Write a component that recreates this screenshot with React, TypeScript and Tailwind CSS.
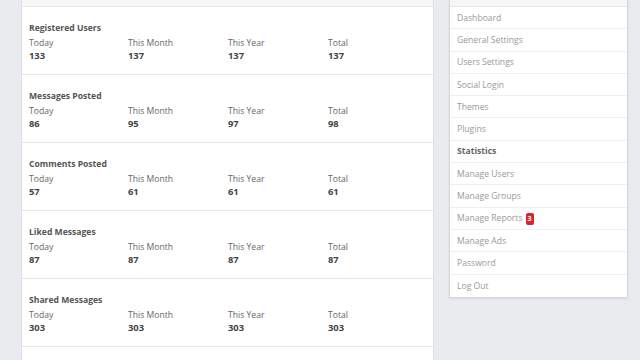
const stats = [
  { title: "Registered Users", values: ["133", "137", "137", "137"] },
  { title: "Messages Posted", values: ["86", "95", "97", "98"] },
  { title: "Comments Posted", values: ["57", "61", "61", "61"] },
  { title: "Liked Messages", values: ["87", "87", "87", "87"] },
  { title: "Shared Messages", values: ["303", "303", "303", "303"] },
];

const periods = ["Today", "This Month", "This Year", "Total"];

const menu = [
  "Dashboard",
  "General Settings",
  "Users Settings",
  "Social Login",
  "Themes",
  "Plugins",
  "Statistics",
  "Manage Users",
  "Manage Groups",
  "Manage Reports",
  "Manage Ads",
  "Password",
  "Log Out",
];

export default function App() {
  return (
    <div
      className="flex h-[360px] w-[640px] items-start overflow-hidden bg-[#e9ebee]"
      style={{ fontFamily: '"Open Sans", sans-serif' }}
    >
      {/* stats panel */}
      <div className="ml-[21px] w-[413px] border-x border-[#dcdfe3] bg-white">
        <div className="h-[7px] border-b border-[#e6e6e6] bg-[#f7f7f7]" />
        {stats.map((s) => (
          <div key={s.title} className="h-[68px] border-b border-[#e6e6e6] px-[7px] pt-[15px]">
            <p className="text-[8.6px] leading-[13px] font-bold text-[#555]">{s.title}</p>
            <div className="mt-[2px] grid grid-cols-[99px_100px_100px_100px]">
              {periods.map((p, i) => (
                <div key={p}>
                  <p className="text-[8.6px] leading-[12px] text-[#666]">{p}</p>
                  <p className="text-[9.4px] leading-[13px] font-bold text-[#444]">{s.values[i]}</p>
                </div>
              ))}
            </div>
          </div>
        ))}
        <div className="h-[30px]" />
      </div>

      {/* sidebar menu */}
      <div className="ml-[15px] w-[179px] border border-t-0 border-[#d5d8dc] bg-white shadow-[0_1px_2px_rgba(0,0,0,0.08)]">
        <div className="h-[7px] border-b border-[#e6e6e6] bg-[#f7f7f7]" />
        {menu.map((m, i) => (
          <div
            key={m}
            className={
              "flex h-[22.3px] items-center gap-[3px] px-[7px] pt-[1px] text-[8.6px] " +
              (i < menu.length - 1 ? "border-b border-[#efefef] " : "") +
              (m === "Statistics" ? "font-bold text-[#666]" : "text-[#999]")
            }
          >
            <span>{m}</span>
            {m === "Manage Reports" && (
              <span className="flex h-[12px] w-[8px] items-center justify-center rounded-[2px] bg-[#d9232e] text-[7px] font-bold text-white">
                3
              </span>
            )}
          </div>
        ))}
      </div>
    </div>
  );
}
